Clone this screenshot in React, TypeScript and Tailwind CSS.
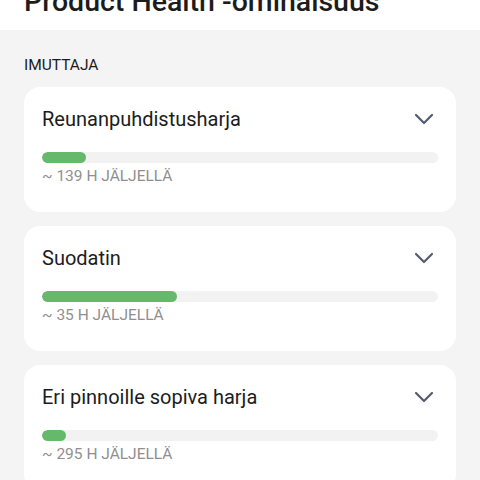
import { ChevronDown } from "lucide-react";

type Part = { name: string; hours: number; pct: number };

const parts: Part[] = [
  { name: "Reunanpuhdistusharja", hours: 139, pct: 11 },
  { name: "Suodatin", hours: 35, pct: 34 },
  { name: "Eri pinnoille sopiva harja", hours: 295, pct: 6 },
];

function PartCard({ part }: { part: Part }) {
  return (
    <div className="bg-white rounded-[16px] px-[18px] pt-[20px] pb-[26px]">
      <div className="flex items-center justify-between h-[24px]">
        <span className="text-[20px] text-[#1c1c1c]">{part.name}</span>
        <ChevronDown className="w-[32px] h-[32px] text-[#535b70] -mr-[2px] shrink-0" strokeWidth={1.6} />
      </div>
      <div className="mt-[21px] h-[11px] w-full rounded-full bg-[#f2f2f2] overflow-hidden">
        <div className="h-full rounded-full bg-[#66b96a]" style={{ width: `${part.pct}%` }} />
      </div>
      <div className="mt-[3px] text-[15.5px] text-[#8f8f8f] leading-[20px]">
        ~ {part.hours} H JÄLJELLÄ
      </div>
    </div>
  );
}

export default function App() {
  return (
    <div className="w-[480px] h-[480px] overflow-hidden bg-[#f4f4f4]" style={{ fontFamily: "Roboto, 'Noto Sans', sans-serif" }}>
      <div className="bg-white h-[30px] overflow-hidden px-[24px]">
        <h1 className="text-[28.5px] font-medium text-[#1c1c1c] leading-[34px] -mt-[15px]">
          Product Health -ominaisuus
        </h1>
      </div>
      <div className="px-[24px]">
        <div className="pt-[26px] pb-[13px] text-[15.5px] text-[#1c1c1c] leading-[18px]">IMUTTAJA</div>
        <div className="flex flex-col gap-[14px]">
          {parts.map((p) => (
            <PartCard key={p.name} part={p} />
          ))}
        </div>
      </div>
    </div>
  );
}
